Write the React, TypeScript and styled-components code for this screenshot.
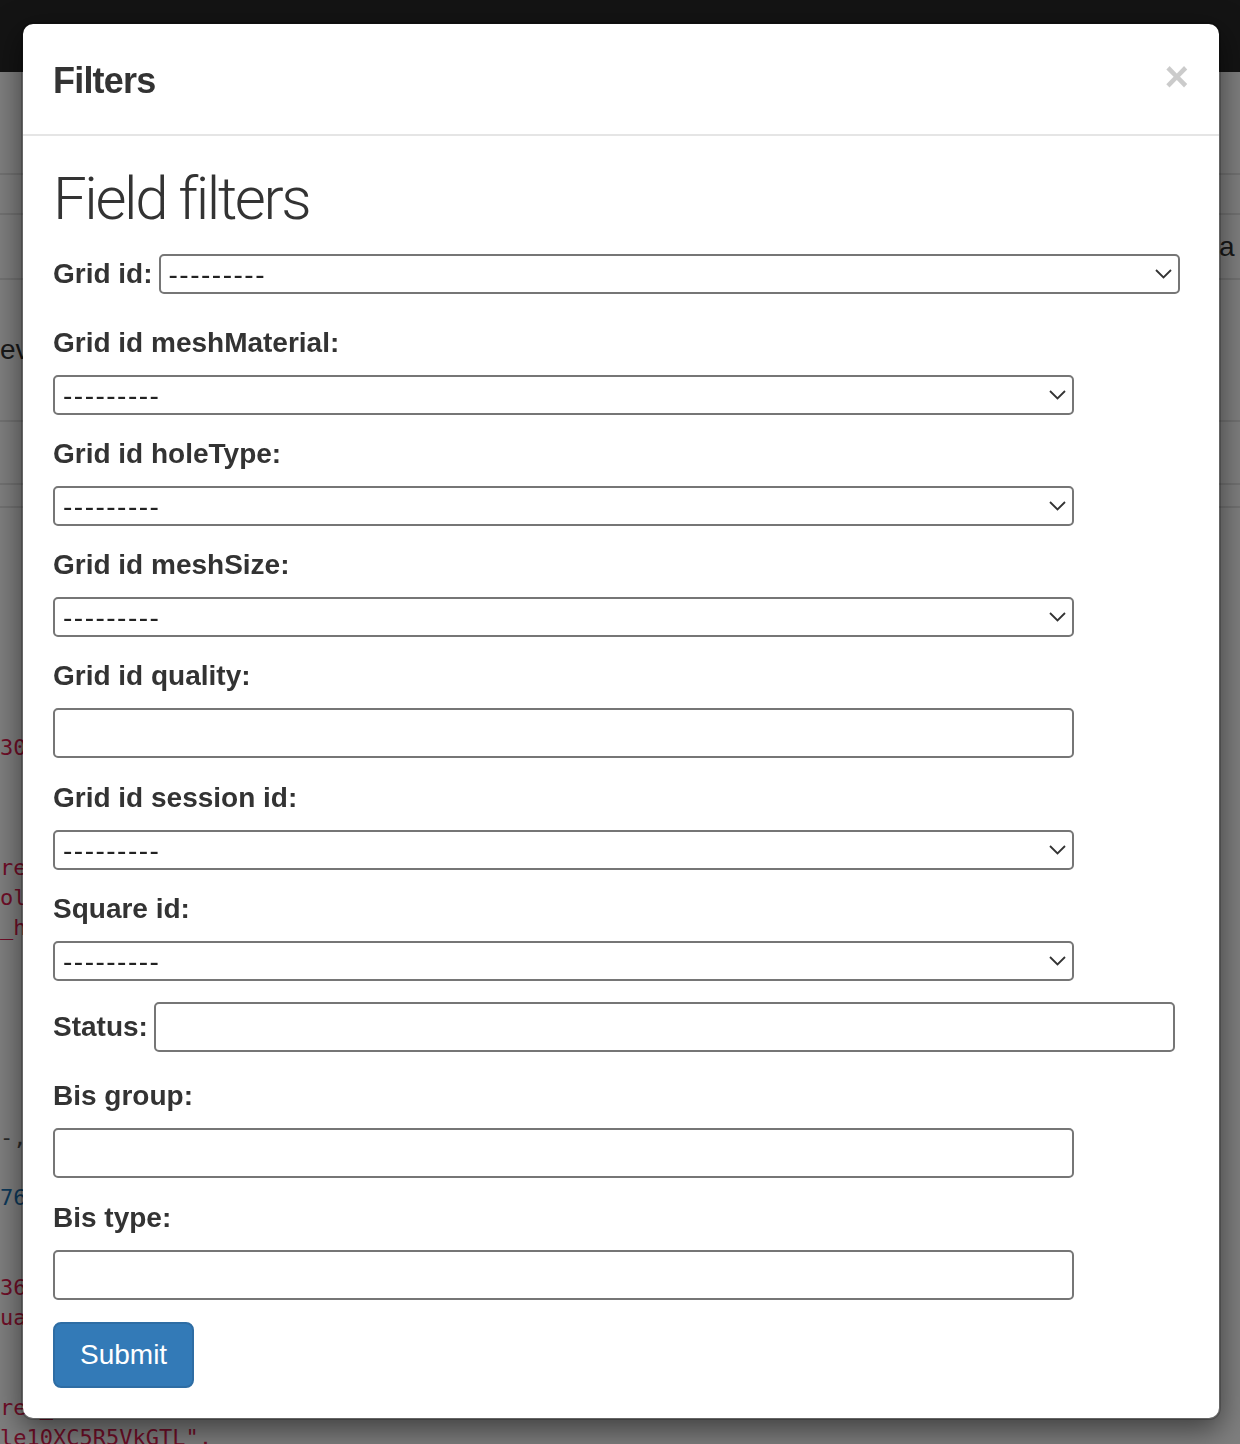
import React from "react";
import styled, { createGlobalStyle } from "styled-components";

const GlobalStyle = createGlobalStyle`
  html, body {
    margin: 0;
    padding: 0;
  }
  body {
    background: #fff;
    color: #333;
    font-family: "Liberation Sans", Arial, sans-serif;
  }
  * {
    box-sizing: border-box;
  }
`;

/* ---------- page behind the dialog ---------- */

const Page = styled.div`
  height: 1444px;
  overflow: hidden;
  background: #fff;
`;

const Navbar = styled.div`
  height: 72px;
  background: #282828;
`;

const TableRow = styled.div<{ $h: number }>`
  display: grid;
  grid-template-columns: 1219px 1fr;
  align-items: center;
  height: ${p => p.$h}px;
  border-bottom: 2px solid #e4e4e4;
  font-size: 28px;
  color: #333;
  white-space: nowrap;
  overflow: hidden;
`;

const CodeBlock = styled.pre`
  margin: 225px 0 0;
  font-family: "DejaVu Sans Mono", "Liberation Mono", monospace;
  font-size: 22px;
  line-height: 30px;
  color: #e01c50;
  white-space: pre;
  overflow: hidden;
`;

const Punct = styled.span`
  color: #555;
`;

const Num = styled.span`
  color: #1a73b4;
`;

const Backdrop = styled.div`
  position: fixed;
  inset: 0;
  background: rgba(0, 0, 0, 0.5);
`;

/* ---------- dialog ---------- */

const Dialog = styled.div`
  position: absolute;
  top: 22px;
  left: 21px;
  width: 1200px;
  background: #fff;
  background-clip: padding-box;
  border: 2px solid rgba(0, 0, 0, 0.2);
  border-radius: 12px;
  box-shadow: 0 10px 30px rgba(0, 0, 0, 0.5);
`;

const Header = styled.div`
  display: flex;
  justify-content: space-between;
  align-items: flex-start;
  padding: 32px 30px 28px;
  border-bottom: 2px solid #e5e5e5;
`;

const Title = styled.h4`
  margin: 0;
  font-size: 36px;
  line-height: 50px;
  font-weight: 700;
  letter-spacing: -0.8px;
  color: #333;
`;

const CloseButton = styled.button`
  margin-top: 0;
  padding: 0;
  border: 0;
  background: transparent;
  font-family: "Liberation Sans", Arial, sans-serif;
  font-size: 42px;
  font-weight: 700;
  line-height: 1;
  color: #000;
  opacity: 0.2;
  cursor: pointer;
`;

const Body = styled.form`
  padding: 30px;
`;

const Heading = styled.h2`
  margin: 0 0 22px;
  font-family: Roboto, "Liberation Sans", sans-serif;
  font-size: 60px;
  font-weight: 300;
  line-height: 66px;
  letter-spacing: -2.4px;
  color: #333;
`;

const Field = styled.p<{ $mb: number }>`
  display: flex;
  flex-wrap: wrap;
  align-items: center;
  column-gap: 6px;
  row-gap: 12px;
  margin: 0 0 ${p => p.$mb}px;
`;

const Label = styled.label`
  font-size: 28px;
  line-height: 40px;
  font-weight: 700;
  color: #333;
  white-space: nowrap;
`;

const SelectWrap = styled.div`
  position: relative;
  width: 1021px;
  height: 40px;
`;

const Select = styled.select`
  appearance: none;
  width: 100%;
  height: 100%;
  margin: 0;
  padding: 0 40px 0 8px;
  border: 2px solid #767676;
  border-radius: 5px;
  background: #fff;
  font-family: "Liberation Sans", Arial, sans-serif;
  font-size: 28px;
  letter-spacing: 1.5px;
  color: #222;
`;

const Chevron = styled.svg`
  position: absolute;
  right: 8px;
  top: 15px;
  pointer-events: none;
`;

const TextInput = styled.input`
  width: 1021px;
  height: 50px;
  margin: 0;
  padding: 0 10px;
  border: 2px solid #767676;
  border-radius: 5px;
  background: #fff;
  font-family: "Liberation Sans", Arial, sans-serif;
  font-size: 28px;
  color: #222;
`;

const SubmitButton = styled.button`
  height: 66px;
  padding: 0 25px;
  border: 2px solid #2e6da4;
  border-radius: 8px;
  background: #337ab7;
  color: #fff;
  font-family: "Liberation Sans", Arial, sans-serif;
  font-size: 28px;
  line-height: 40px;
  cursor: pointer;
`;

type FieldDef = {
  label: string;
  kind: "select" | "input";
  mb: number;
};

const fields: FieldDef[] = [
  { label: "Grid id:", kind: "select", mb: 29 },
  { label: "Grid id meshMaterial:", kind: "select", mb: 19 },
  { label: "Grid id holeType:", kind: "select", mb: 19 },
  { label: "Grid id meshSize:", kind: "select", mb: 19 },
  { label: "Grid id quality:", kind: "input", mb: 20 },
  { label: "Grid id session id:", kind: "select", mb: 19 },
  { label: "Square id:", kind: "select", mb: 21 },
  { label: "Status:", kind: "input", mb: 24 },
  { label: "Bis group:", kind: "input", mb: 20 },
  { label: "Bis type:", kind: "input", mb: 22 },
];

const Dropdown: React.FC<{ id: string }> = ({ id }) => (
  <SelectWrap>
    <Select id={id} defaultValue="">
      <option value="">---------</option>
    </Select>
    <Chevron width="17" height="10" viewBox="0 0 17 10">
      <polyline points="1,1 8.5,8.5 16,1" fill="none" stroke="#333" strokeWidth="1.8" />
    </Chevron>
  </SelectWrap>
);

const App: React.FC = () => {
  return (
    <>
      <GlobalStyle />
      <Page>
        <Navbar />
        <TableRow $h={103} />
        <TableRow $h={40} />
        <TableRow $h={65}>
          <span />
          <span>a / b</span>
        </TableRow>
        <TableRow $h={142}>
          <span>ev</span>
        </TableRow>
        <TableRow $h={63} />
        <TableRow $h={23} />
        <CodeBlock>
          {"300\n\n\n\nre1\nole\n_ho\n\n\n\n\n\n\n"}
          <Punct>{"-,"}</Punct>
          {"\n\n"}
          <Num>{"762"}</Num>
          {"\n\n\n36r\nua\n\n\nre1_\nle10XC5R5VkGTL\","}
        </CodeBlock>
      </Page>
      <Backdrop />
      <Dialog>
        <Header>
          <Title>Filters</Title>
          <CloseButton type="button" aria-label="Close">×</CloseButton>
        </Header>
        <Body onSubmit={e => e.preventDefault()}>
          <Heading>Field filters</Heading>
          {fields.map((f, i) => (
            <Field key={f.label} $mb={f.mb}>
              <Label htmlFor={`f${i}`}>{f.label}</Label>
              {f.kind === "select" ? <Dropdown id={`f${i}`} /> : <TextInput id={`f${i}`} type="text" />}
            </Field>
          ))}
          <SubmitButton type="submit">Submit</SubmitButton>
        </Body>
      </Dialog>
    </>
  );
};

export default App;
